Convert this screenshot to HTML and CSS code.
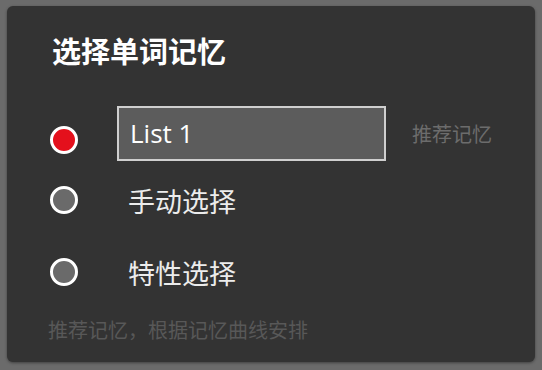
FILE: index.html
```html
<!DOCTYPE html>
<html lang="zh-CN">
<head>
   <meta charset="UTF-8">
   <meta name="viewport" content="width=device-width, initial-scale=1.0">
   <title>选择单词记忆</title>
   <link rel="stylesheet" href="styles.css">
</head>
<body>
   <div class="dialog">
      <h1 class="dialog-title">选择单词记忆</h1>

      <div class="option option-first">
         <span class="radio checked"></span>
         <div class="list-box">List 1</div>
         <span class="hint">推荐记忆</span>
      </div>

      <div class="option option-second">
         <span class="radio"></span>
         <span class="option-label">手动选择</span>
      </div>

      <div class="option option-third">
         <span class="radio"></span>
         <span class="option-label">特性选择</span>
      </div>

      <p class="footer-note">推荐记忆，根据记忆曲线安排</p>
   </div>
</body>
</html>
```

FILE: styles.css
```css
body {
   margin: 0;
   background-color: #6b6b6b;
   font-family: "Noto Sans CJK SC", "Noto Sans", sans-serif;
}

.dialog {
   margin: 6px 7px;
   width: 528px;
   height: 356px;
   background-color: #333333;
   border-radius: 6px;
   box-shadow: 0 1px 3px rgba(0, 0, 0, 0.4);
   overflow: hidden;
}

.dialog-title {
   margin: 26px 0 0 45px;
   font-size: 29px;
   line-height: 36px;
   font-weight: bold;
   color: #ffffff;
}

.option {
   display: flex;
   align-items: center;
   padding-left: 43px;
}

.option-first {
   margin-top: 38px;
   height: 55px;
}

.option-first .radio {
   margin-top: 12px;
}

.option-second {
   margin-top: 17px;
   height: 44px;
}

.option-third {
   margin-top: 28px;
   height: 44px;
}

.radio {
   box-sizing: border-box;
   width: 28px;
   height: 28px;
   border: 3px solid #ffffff;
   border-radius: 50%;
   background-color: #6a6a6a;
   flex-shrink: 0;
}

.radio.checked {
   background-color: #e4101c;
}

.list-box {
   box-sizing: border-box;
   margin-left: 39px;
   width: 269px;
   height: 55px;
   border: 2px solid #cfcfcf;
   background-color: #5c5c5c;
   padding-left: 11px;
   font-family: "Open Sans", "Noto Sans", sans-serif;
   font-size: 26px;
   line-height: 50px;
   color: #ffffff;
}

.hint {
   margin-left: 26px;
   margin-bottom: 1px;
   font-size: 20px;
   color: #6c6c6c;
}

.option-label {
   margin-left: 50px;
   font-size: 27px;
   color: #ececec;
}

.footer-note {
   margin: 22px 0 0 41px;
   font-size: 20px;
   line-height: 28px;
   color: #585858;
}
```
